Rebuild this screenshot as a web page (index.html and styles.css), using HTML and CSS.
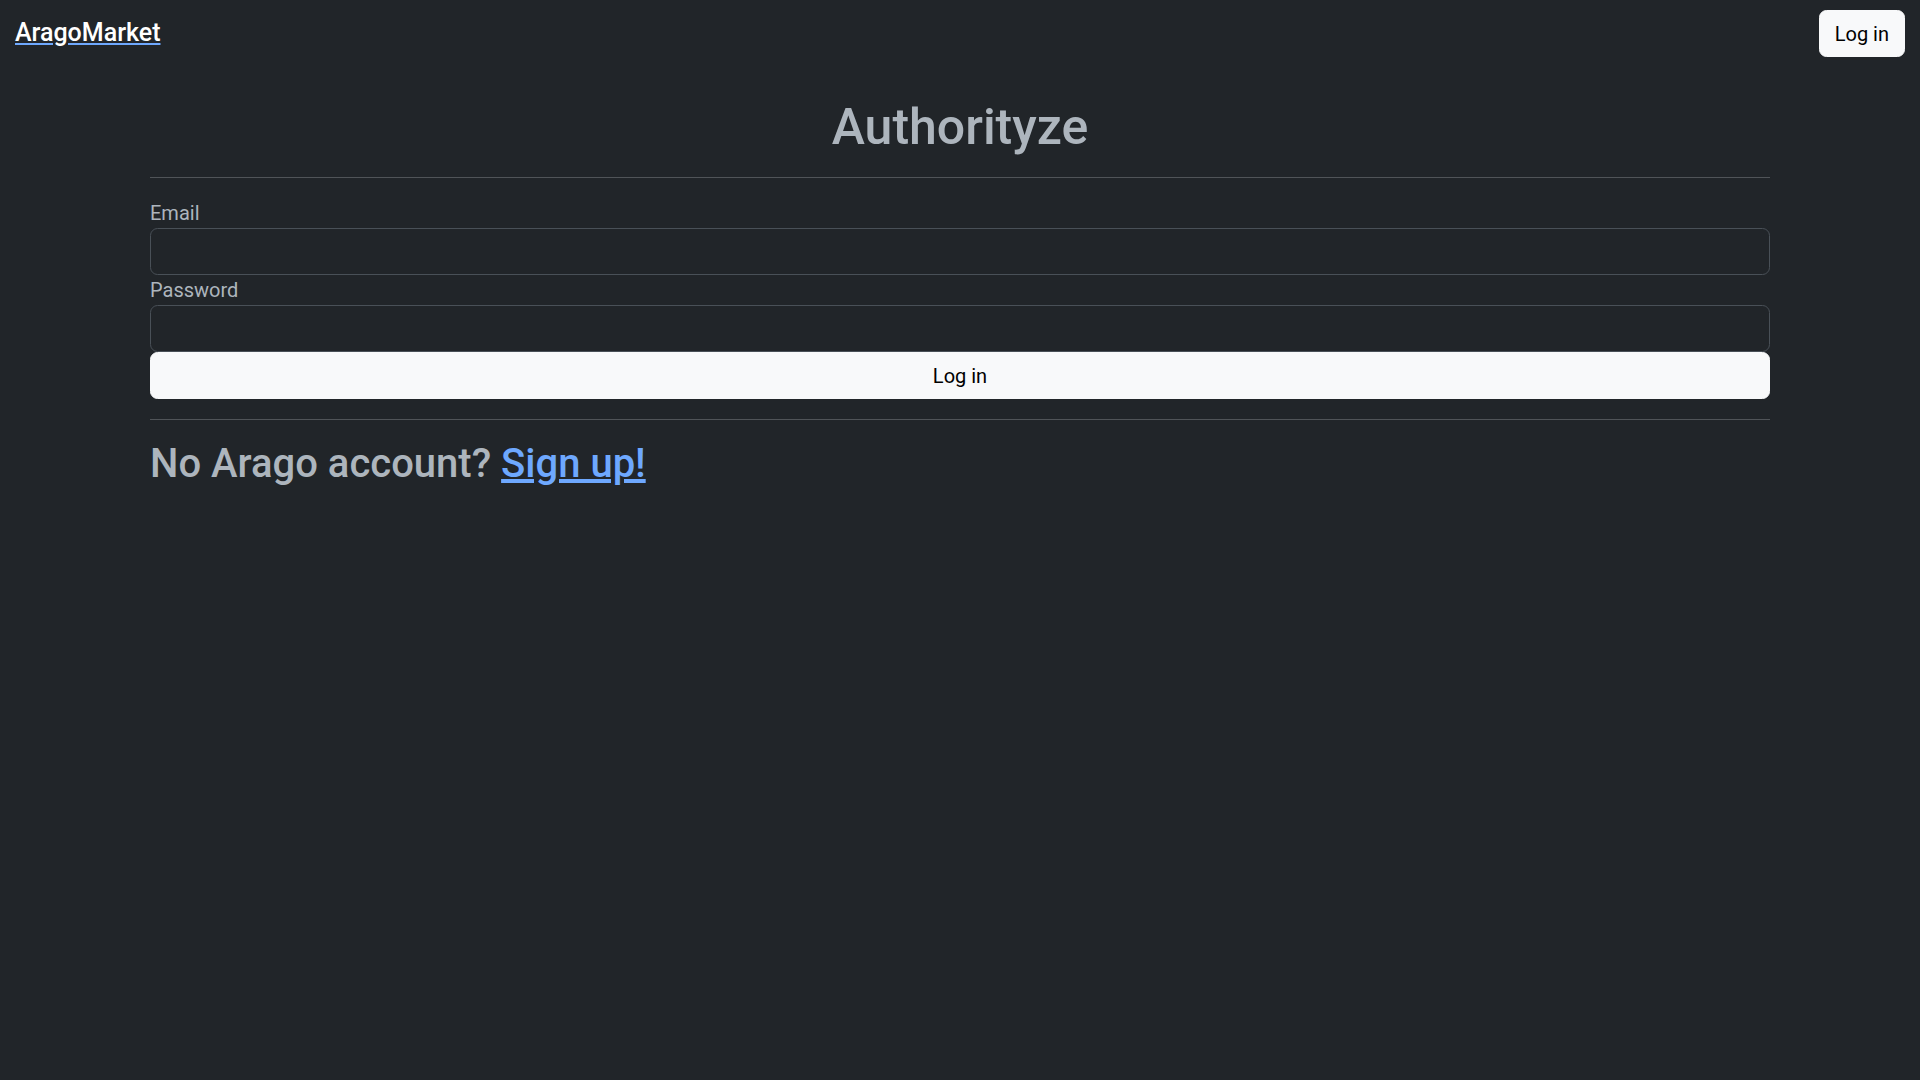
FILE: index.html
```html
<!DOCTYPE html>
<html lang="en">
<head>
<meta charset="utf-8">
<title>AragoMarket</title>
<link rel="stylesheet" href="styles.css">
</head>
<body>
<header class="navbar">
  <a class="brand" href="#"><span class="brand-text">AragoMarket</span></a>
  <button class="btn btn-nav" type="button">Log in</button>
</header>
<main class="container">
  <h1 class="title">Authorityze</h1>
  <hr class="divider">
  <form class="login-form">
    <label class="form-label" for="email">Email</label>
    <input class="form-control" id="email" type="email">
    <label class="form-label" for="password">Password</label>
    <input class="form-control" id="password" type="password">
    <button class="btn btn-submit" type="submit">Log in</button>
  </form>
  <hr class="divider">
  <h2 class="signup">No Arago account? <a class="signup-link" href="#">Sign up!</a></h2>
</main>
</body>
</html>
```

FILE: styles.css
```css
* { box-sizing: border-box; }
html, body { margin: 0; padding: 0; }
body {
  background: #212529;
  color: #adb5bd;
  font-family: Roboto, "Liberation Sans", sans-serif;
  font-size: 20px;
  line-height: 1.5;
  min-height: 1080px;
}
.navbar {
  display: flex;
  justify-content: space-between;
  align-items: flex-start;
  padding: 10px 15px 0 15px;
  height: 67px;
}
.brand {
  display: block;
  margin-top: 4px;
  font-size: 25px;
  font-weight: 500;
  line-height: 37.5px;
  color: #6ea8fe;
  text-decoration: underline;
  text-decoration-color: #6ea8fe;
  text-underline-offset: 2px;
}
.brand-text { color: #ffffff; }
.btn {
  font-family: inherit;
  font-size: 20px;
  line-height: 30px;
  padding: 7.5px 15px;
  border: 1px solid #f8f9fa;
  border-radius: 7.5px;
  background: #f8f9fa;
  color: #000;
  cursor: pointer;
}
.container {
  margin: 0 auto;
  width: 1650px;
  padding: 0 15px;
}
.title {
  margin: 30px 0 10px 0;
  text-align: center;
  font-size: 50px;
  font-weight: 500;
  line-height: 60px;
  color: #adb5bd;
}
.divider {
  margin: 20px 0;
  border: 0;
  border-top: 1px solid #dee2e6;
  opacity: 0.25;
}
.login-form {
  display: flex;
  flex-direction: column;
}
.form-label {
  display: block;
  font-size: 20px;
  line-height: 30px;
  margin-top: 0;
  color: #adb5bd;
}
.form-control {
  display: block;
  width: 100%;
  height: 47px;
  padding: 7.5px 15px;
  background: #212529;
  border: 1px solid #495057;
  border-radius: 7.5px;
  color: #dee2e6;
  font-family: inherit;
  font-size: 20px;
  margin-bottom: 0;
}
.btn-submit {
  width: 100%;
  height: 47px;
}
.signup {
  margin: 0;
  font-size: 40px;
  font-weight: 500;
  line-height: 48px;
  color: #adb5bd;
}
.signup-link {
  color: #6ea8fe;
  text-decoration: underline;
}
```
